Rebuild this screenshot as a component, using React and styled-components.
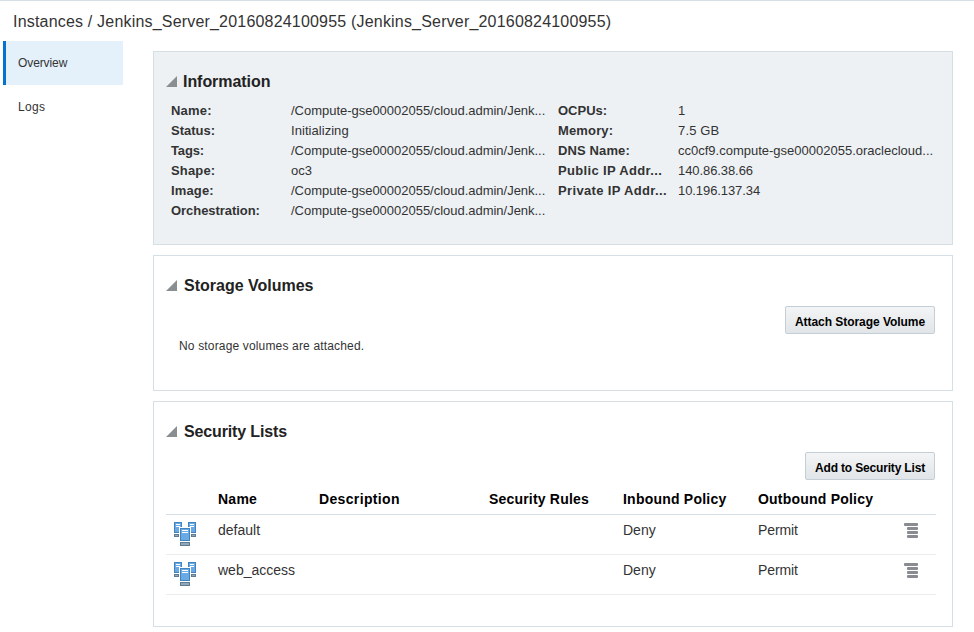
import React from "react";
import styled, { createGlobalStyle } from "styled-components";

const Global = createGlobalStyle`
  * { box-sizing: border-box; }
  html, body { margin: 0; padding: 0; background: #fff; overflow: hidden; }
  body { font-family: "Liberation Sans", Arial, sans-serif; color: #333; }
`;

const Page = styled.div`
  width: 974px;
  height: 632px;
  display: flex;
  flex-direction: column;
  border-top: 1px solid #d6dfe6;
`;

const Breadcrumb = styled.header`
  height: 40px;
  padding: 1px 0 0 13px;
  font-size: 16px;
  line-height: 40px;
  letter-spacing: 0.19px;
  white-space: pre;
`;

const Body = styled.div`
  display: flex;
  padding-left: 3px;
`;

const Nav = styled.nav`
  width: 120px;
  margin-right: 30px;
`;

const NavItem = styled.div`
  height: 44px;
  padding-left: 12px;
  border-left: 3px solid ${(p) => (p.$active ? "#0572ce" : "transparent")};
  background: ${(p) => (p.$active ? "#e4f0fa" : "transparent")};
  font-size: 12px;
  line-height: 44px;
  letter-spacing: ${(p) => p.$spacing || 0}px;
`;

const Main = styled.main`
  width: 800px;
  padding-top: 10px;
  display: flex;
  flex-direction: column;
  gap: 10px;
`;

const Panel = styled.section`
  height: ${(p) => p.$height}px;
  padding: 0 17px 0 12px;
  border: 1px solid #d6dfe6;
  background: ${(p) => (p.$shaded ? "#edf1f4" : "#fff")};
`;

const PanelTitle = styled.h2`
  display: flex;
  align-items: center;
  gap: ${(p) => p.$gap || 7}px;
  height: 20px;
  margin: 20px 0 0;
  color: #222;
  font-size: 16px;
  line-height: 20px;
  letter-spacing: ${(p) => p.$spacing || 0}px;
`;

const Facts = styled.dl`
  display: grid;
  grid-template-columns: 387px 380px;
  margin: 9px 0 0 5px;
`;

const FactColumn = styled.div`
  display: flex;
  flex-direction: column;
`;

const Fact = styled.div`
  display: flex;
  height: 20px;
  font-size: 13px;
  line-height: 20px;
  white-space: nowrap;
`;

const FactLabel = styled.dt`
  width: 120px;
  font-weight: bold;
  letter-spacing: ${(p) => p.$spacing || 0}px;
`;

const FactValue = styled.dd`
  margin: 0;
  letter-spacing: ${(p) => p.$spacing || 0}px;
`;

const Actions = styled.div`
  display: flex;
  justify-content: flex-end;
  margin-top: 10px;
`;

const Button = styled.button`
  width: ${(p) => p.$width}px;
  height: 28px;
  padding: 3px 0 0;
  border: 1px solid #c4ced7;
  border-radius: 2px;
  background: linear-gradient(#f3f4f5, #e1e5e8);
  color: #000;
  font: bold 12px "Liberation Sans", Arial, sans-serif;
  letter-spacing: ${(p) => p.$spacing || 0}px;
  white-space: nowrap;
`;

const Empty = styled.p`
  margin: 2px 0 0 13px;
  font-size: 12px;
  line-height: 20px;
  letter-spacing: 0.16px;
`;

const Table = styled.div`
  width: 770px;
`;

const Row = styled.div`
  display: grid;
  grid-template-columns: 52px 101px 170px 134px 135px 144px 34px;
  height: ${(p) => (p.$head ? 35 : 40)}px;
  padding-top: ${(p) => (p.$head ? 9 : 5)}px;
  border-bottom: 1px solid ${(p) => (p.$head ? "#d6dfe6" : "#ececec")};
  color: ${(p) => (p.$head ? "#000" : "#333")};
  font-size: 14px;
  font-weight: ${(p) => (p.$head ? "bold" : "normal")};
  line-height: 20px;
`;

const Cell = styled.span`
  letter-spacing: ${(p) => p.$spacing || 0}px;
  white-space: nowrap;
`;

const Icon = styled.svg`
  display: block;
  flex: none;
  margin: ${(p) => p.$margin || 0};
`;

const Disclosure = () => (
  <Icon width="11" height="11" viewBox="0 0 11 11" $margin="0 0 1px">
    <path d="M11 0V11H0Z" fill="#8b8e91" />
  </Icon>
);

const ServersIcon = () => (
  <Icon width="22" height="24" viewBox="0 0 22 24" $margin="2px 0 0 8px" shapeRendering="crispEdges">
    {[0, 14].map((x) => (
      <g key={x}>
        <path d={`M${x} 0h8v11h-8z`} fill="#3f83c1" />
        <path d={`M${x + 1} 1h6v9h-6z`} fill="#6aa9e4" />
        <path d={`M${x + 2} 2h4v1h-4zM${x + 2} 4h4v1h-4z`} fill="#fff" />
      </g>
    ))}
    <path d="M0 12h5v3H0zM17 12h5v3h-5z" fill="#5f7b91" />
    <path d="M1 13h3v1H1zM18 13h3v1h-3z" fill="#92a7b7" />
    <path d="M5 5h12v15H5z" fill="#fff" />
    <path d="M6 6h10v13H6z" fill="#3f83c1" />
    <path d="M7 7h8v11H7z" fill="#6aa9e4" />
    <path d="M8 8h6v1H8zM8 10h6v1H8z" fill="#fff" />
    <path d="M6 20h10v4H6z" fill="#5f7b91" />
    <path d="M7 21h8v2H7z" fill="#92a7b7" />
  </Icon>
);

const MenuIcon = () => (
  <Icon width="14" height="15" viewBox="0 0 14 15" $margin="3px 0 0 2px">
    <g fill="#888c90">
      <rect x="0" y="0" width="14" height="3" rx="1" />
      <rect x="3" y="4" width="11" height="3" rx="1" />
      <rect x="3" y="8" width="11" height="3" rx="1" />
      <rect x="3" y="12" width="11" height="3" rx="1" />
    </g>
  </Icon>
);

const PATH = "/Compute-gse00002055/cloud.admin/Jenk...";

// Each fact: label, value, label tracking, value tracking.
const FACTS = [
  [
    ["Name:", PATH, 0.2, -0.02],
    ["Status:", "Initializing", 0, 0.05],
    ["Tags:", PATH, -0.15, -0.02],
    ["Shape:", "oc3", 0.15, 0],
    ["Image:", PATH, 0.15, -0.02],
    ["Orchestration:", PATH, -0.05, -0.02],
  ],
  [
    ["OCPUs:", "1", 0, 0],
    ["Memory:", "7.5 GB", 0.15, 0.15],
    ["DNS Name:", "cc0cf9.compute-gse00002055.oraclecloud...", 0.12, 0],
    ["Public IP Addr...", "140.86.38.66", 0.35, -0.08],
    ["Private IP Addr...", "10.196.137.34", 0.35, -0.08],
  ],
];

const HEADERS = [
  ["", 0],
  ["Name", 0.25],
  ["Description", 0.35],
  ["Security Rules", 0.19],
  ["Inbound Policy", 0.22],
  ["Outbound Policy", 0.21],
  ["", 0],
];

export default function App() {
  return (
    <>
      <Global />
      <Page>
        <Breadcrumb>Instances / Jenkins_Server_20160824100955 (Jenkins_Server_20160824100955)</Breadcrumb>
        <Body>
          <Nav>
            <NavItem $active $spacing={-0.1}>Overview</NavItem>
            <NavItem $spacing={0.35}>Logs</NavItem>
          </Nav>
          <Main>
            <Panel $height={194} $shaded>
              <PanelTitle $gap={6} $spacing={-0.05}><Disclosure />Information</PanelTitle>
              <Facts>
                {FACTS.map((column, i) => (
                  <FactColumn key={i}>
                    {column.map(([label, value, labelSpacing, valueSpacing]) => (
                      <Fact key={label}>
                        <FactLabel $spacing={labelSpacing}>{label}</FactLabel>
                        <FactValue $spacing={valueSpacing}>{value}</FactValue>
                      </Fact>
                    ))}
                  </FactColumn>
                ))}
              </Facts>
            </Panel>
            <Panel $height={136}>
              <PanelTitle><Disclosure />Storage Volumes</PanelTitle>
              <Actions><Button $width={150} $spacing={-0.05}>Attach Storage Volume</Button></Actions>
              <Empty>No storage volumes are attached.</Empty>
            </Panel>
            <Panel $height={226}>
              <PanelTitle $spacing={-0.14}><Disclosure />Security Lists</PanelTitle>
              <Actions><Button $width={130} $spacing={-0.17}>Add to Security List</Button></Actions>
              <Table>
                <Row $head>
                  {HEADERS.map(([text, spacing], i) => <Cell key={i} $spacing={spacing}>{text}</Cell>)}
                </Row>
                {["default", "web_access"].map((name) => (
                  <Row key={name}>
                    <ServersIcon />
                    <Cell>{name}</Cell>
                    <Cell />
                    <Cell />
                    <Cell>Deny</Cell>
                    <Cell $spacing={-0.1}>Permit</Cell>
                    <MenuIcon />
                  </Row>
                ))}
              </Table>
            </Panel>
          </Main>
        </Body>
      </Page>
    </>
  );
}
